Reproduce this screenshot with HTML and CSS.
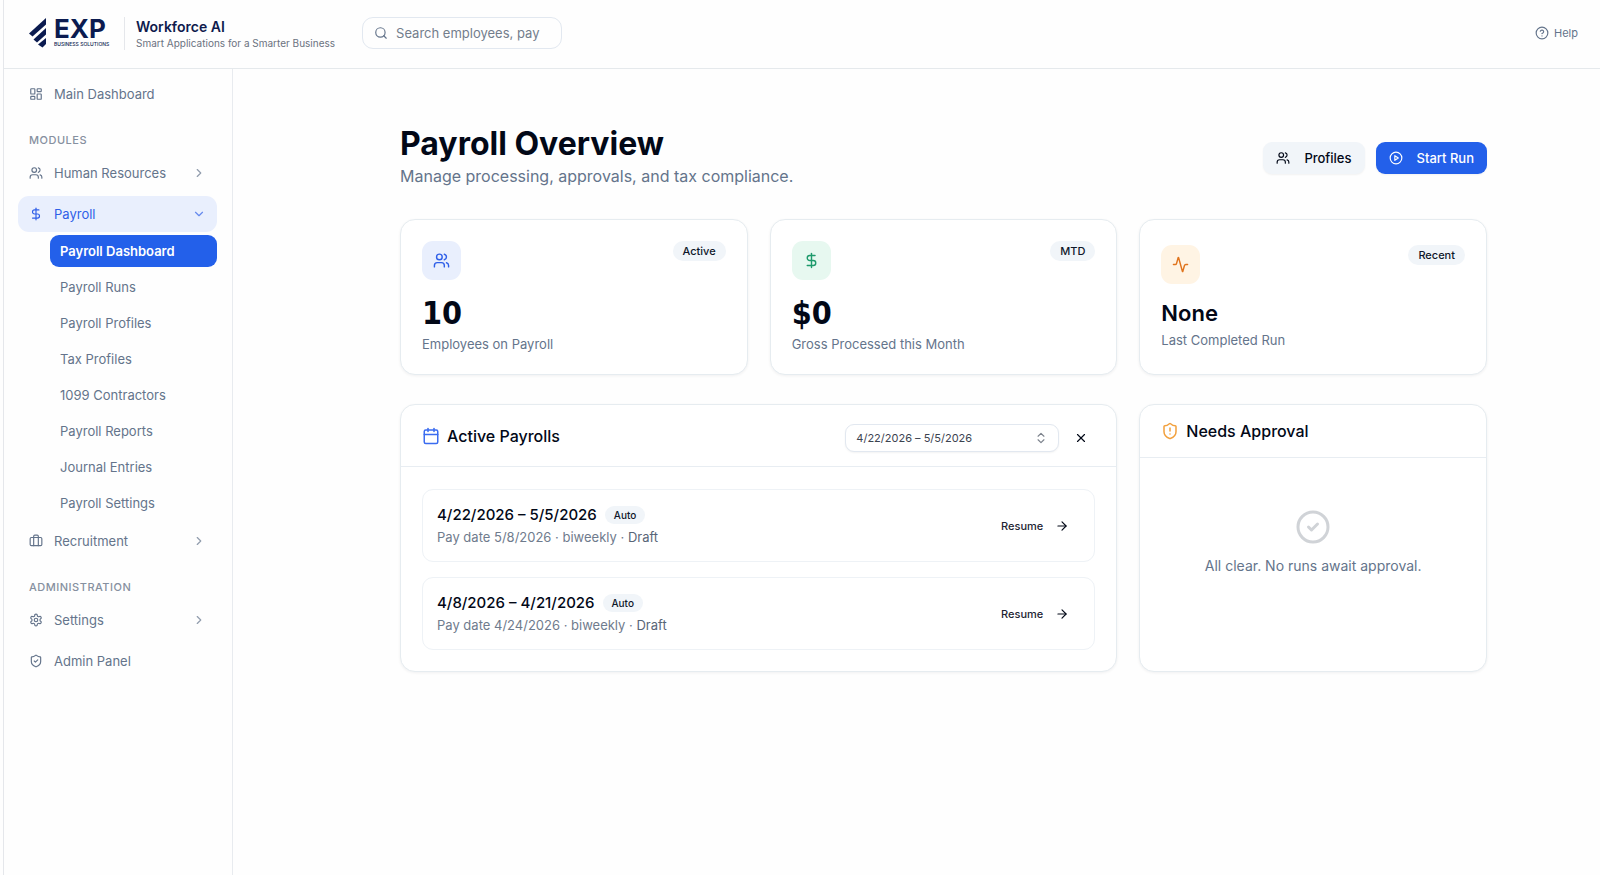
FILE: index.html
```html
<!DOCTYPE html>
<html lang="en">

<head>
    <meta charset="UTF-8">
    <meta name="viewport" content="width=device-width, initial-scale=1.0">
    <title>Payroll Overview</title>
    <link rel="stylesheet" href="styles.css">
</head>

<body>
    <!-- Shared icons -->
    <svg class="sprite" aria-hidden="true">
        <symbol id="users" viewBox="0 0 24 24"><path d="M16 21v-2a4 4 0 0 0-4-4H6a4 4 0 0 0-4 4v2"/><circle cx="9" cy="7" r="4"/><path d="M22 21v-2a4 4 0 0 0-3-3.870"/><path d="M16 3.130a4 4 0 0 1 0 7.750"/></symbol>
        <symbol id="dollar" viewBox="0 0 24 24"><path d="M12 2v20"/><path d="M17 5H9.500a3.500 3.500 0 0 0 0 7h5a3.500 3.500 0 0 1 0 7H6"/></symbol>
        <symbol id="right" viewBox="0 0 24 24"><path d="m9 18 6-6-6-6"/></symbol>
        <symbol id="arrow" viewBox="0 0 24 24"><path d="M5 12h14"/><path d="m12 5 7 7-7 7"/></symbol>
    </svg>

    <header class="topbar">
        <a class="logo" href="#">
            <svg class="logo-mark" viewBox="0 0 18 30">
                <path d="M17 0v6.500L3.500 18.500 0 15.500z"/>
                <path d="M17 10v6.500L8 24.500 4.500 21.500z"/>
                <path d="M17 20v6l-3.500 3.500-4.500-3z"/>
            </svg>
            <span class="logo-text">
                <span class="logo-name">EXP</span>
                <span class="logo-sub">BUSINESS SOLUTIONS</span>
            </span>
        </a>
        <div class="product">
            <span class="product-name">Workforce AI</span>
            <span class="product-tagline">Smart Applications for a Smarter Business</span>
        </div>
        <label class="search">
            <svg class="icon" viewBox="0 0 24 24"><circle cx="11" cy="11" r="8"/><path d="m21 21-4.300-4.300"/></svg>
            <input type="text" placeholder="Search employees, pay" aria-label="Search">
        </label>
        <a class="help" href="#">
            <svg class="icon" viewBox="0 0 24 24"><circle cx="12" cy="12" r="10"/><path d="M9.100 9a3 3 0 0 1 5.800 1c0 2-3 3-3 3"/><path d="M12 17h.010"/></svg>
            Help
        </a>
    </header>

    <div class="layout">
        <nav class="sidebar">
            <a class="nav-item" href="#">
                <svg class="icon" viewBox="0 0 24 24"><rect x="3" y="3" width="7" height="9" rx="1"/><rect x="14" y="3" width="7" height="5" rx="1"/><rect x="14" y="12" width="7" height="9" rx="1"/><rect x="3" y="16" width="7" height="5" rx="1"/></svg>
                Main Dashboard
            </a>

            <h2 class="nav-label">Modules</h2>
            <button class="nav-item" type="button">
                <svg class="icon"><use href="#users"/></svg>
                Human Resources
                <svg class="icon chevron"><use href="#right"/></svg>
            </button>
            <button class="nav-item open" type="button" aria-expanded="true">
                <svg class="icon"><use href="#dollar"/></svg>
                Payroll
                <svg class="icon chevron" viewBox="0 0 24 24"><path d="m6 9 6 6 6-6"/></svg>
            </button>
            <div class="subnav">
                <a class="active" href="#">Payroll Dashboard</a>
                <a href="#">Payroll Runs</a>
                <a href="#">Payroll Profiles</a>
                <a href="#">Tax Profiles</a>
                <a href="#">1099 Contractors</a>
                <a href="#">Payroll Reports</a>
                <a href="#">Journal Entries</a>
                <a href="#">Payroll Settings</a>
            </div>
            <button class="nav-item" type="button">
                <svg class="icon" viewBox="0 0 24 24"><rect x="2" y="6" width="20" height="14" rx="2"/><path d="M16 20V4a2 2 0 0 0-2-2h-4a2 2 0 0 0-2 2v16"/></svg>
                Recruitment
                <svg class="icon chevron"><use href="#right"/></svg>
            </button>

            <h2 class="nav-label">Administration</h2>
            <button class="nav-item" type="button">
                <svg class="icon" viewBox="0 0 24 24"><path d="M12.220 2h-.440a2 2 0 0 0-2 2v.180a2 2 0 0 1-1 1.730l-.430.250a2 2 0 0 1-2 0l-.150-.080a2 2 0 0 0-2.730.730l-.220.380a2 2 0 0 0 .730 2.730l.150.100a2 2 0 0 1 1 1.720v.510a2 2 0 0 1-1 1.740l-.150.090a2 2 0 0 0-.730 2.730l.220.380a2 2 0 0 0 2.730.730l.150-.080a2 2 0 0 1 2 0l.430.250a2 2 0 0 1 1 1.730V20a2 2 0 0 0 2 2h.440a2 2 0 0 0 2-2v-.180a2 2 0 0 1 1-1.730l.430-.250a2 2 0 0 1 2 0l.150.080a2 2 0 0 0 2.730-.730l.220-.390a2 2 0 0 0-.730-2.730l-.150-.080a2 2 0 0 1-1-1.740v-.500a2 2 0 0 1 1-1.740l.150-.090a2 2 0 0 0 .730-2.730l-.220-.380a2 2 0 0 0-2.730-.730l-.150.080a2 2 0 0 1-2 0l-.430-.250a2 2 0 0 1-1-1.730V4a2 2 0 0 0-2-2z"/><circle cx="12" cy="12" r="3"/></svg>
                Settings
                <svg class="icon chevron"><use href="#right"/></svg>
            </button>
            <a class="nav-item" href="#">
                <svg class="icon" viewBox="0 0 24 24"><path d="M20 13c0 5-3.500 7.500-7.660 8.950a1 1 0 0 1-.670-.010C7.500 20.500 4 18 4 13V6a1 1 0 0 1 1-1c2 0 4.500-1.200 6.240-2.720a1.170 1.170 0 0 1 1.520 0C14.510 3.810 17 5 19 5a1 1 0 0 1 1 1z"/><path d="m9 12 2 2 4-4"/></svg>
                Admin Panel
            </a>
        </nav>

        <main class="main">
            <div class="content">
                <div class="page-head">
                    <div>
                        <h1>Payroll Overview</h1>
                        <p>Manage processing, approvals, and tax compliance.</p>
                    </div>
                    <div class="actions">
                        <button class="btn" type="button">
                            <svg class="icon"><use href="#users"/></svg>
                            Profiles
                        </button>
                        <button class="btn primary" type="button">
                            <svg class="icon" viewBox="0 0 24 24"><circle cx="12" cy="12" r="10"/><path d="m10 8 6 4-6 4z"/></svg>
                            Start Run
                        </button>
                    </div>
                </div>

                <div class="grid">
                    <section class="card stat">
                        <div class="stat-top">
                            <span class="tile blue"><svg class="icon"><use href="#users"/></svg></span>
                            <span class="badge">Active</span>
                        </div>
                        <strong class="stat-value">10</strong>
                        <span class="stat-label">Employees on Payroll</span>
                    </section>
                    <section class="card stat">
                        <div class="stat-top">
                            <span class="tile green"><svg class="icon"><use href="#dollar"/></svg></span>
                            <span class="badge">MTD</span>
                        </div>
                        <strong class="stat-value">$0</strong>
                        <span class="stat-label">Gross Processed this Month</span>
                    </section>
                    <section class="card stat">
                        <div class="stat-top">
                            <span class="tile orange"><svg class="icon" viewBox="0 0 24 24"><path d="M22 12h-2.480a2 2 0 0 0-1.930 1.460l-2.350 8.360a.250.250 0 0 1-.480 0L9.240 2.180a.250.250 0 0 0-.480 0l-2.350 8.360A2 2 0 0 1 4.490 12H2"/></svg></span>
                            <span class="badge">Recent</span>
                        </div>
                        <strong class="stat-value word">None</strong>
                        <span class="stat-label">Last Completed Run</span>
                    </section>

                    <section class="card wide">
                        <div class="card-head tall">
                            <h2>
                                <svg class="icon calendar" viewBox="0 0 24 24"><path d="M8 2v4"/><path d="M16 2v4"/><rect x="3" y="4" width="18" height="18" rx="2"/><path d="M3 10h18"/></svg>
                                Active Payrolls
                            </h2>
                            <div class="filter">
                                <div class="picker">
                                    <select aria-label="Pay period">
                                        <option>4/22/2026 – 5/5/2026</option>
                                        <option>4/8/2026 – 4/21/2026</option>
                                    </select>
                                    <svg class="icon" viewBox="0 0 24 24"><path d="m7 15 5 5 5-5"/><path d="m7 9 5-5 5 5"/></svg>
                                </div>
                                <button class="clear" type="button" aria-label="Clear">
                                    <svg class="icon" viewBox="0 0 24 24"><path d="M18 6 6 18"/><path d="m6 6 12 12"/></svg>
                                </button>
                            </div>
                        </div>
                        <div class="runs">
                            <div class="run">
                                <div>
                                    <h3>4/22/2026 – 5/5/2026 <span class="badge small">Auto</span></h3>
                                    <p>Pay date 5/8/2026 · biweekly · <span>Draft</span></p>
                                </div>
                                <button class="resume" type="button">Resume <svg class="icon"><use href="#arrow"/></svg></button>
                            </div>
                            <div class="run">
                                <div>
                                    <h3>4/8/2026 – 4/21/2026 <span class="badge small">Auto</span></h3>
                                    <p>Pay date 4/24/2026 · biweekly · <span>Draft</span></p>
                                </div>
                                <button class="resume" type="button">Resume <svg class="icon"><use href="#arrow"/></svg></button>
                            </div>
                        </div>
                    </section>

                    <section class="card">
                        <div class="card-head">
                            <h2>
                                <svg class="icon alert" viewBox="0 0 24 24"><path d="M20 13c0 5-3.500 7.500-7.660 8.950a1 1 0 0 1-.670-.010C7.500 20.500 4 18 4 13V6a1 1 0 0 1 1-1c2 0 4.500-1.200 6.240-2.720a1.170 1.170 0 0 1 1.520 0C14.510 3.810 17 5 19 5a1 1 0 0 1 1 1z"/><path d="M12 8v4"/><path d="M12 16h.010"/></svg>
                                Needs Approval
                            </h2>
                        </div>
                        <div class="empty">
                            <svg class="icon" viewBox="0 0 24 24"><circle cx="12" cy="12" r="10"/><path d="m9 12 2 2 4-4"/></svg>
                            <p>All clear. No runs await approval.</p>
                        </div>
                    </section>
                </div>
            </div>
        </main>
    </div>
</body>

</html>
```
FILE: styles.css
```css
/* General */

* {
    box-sizing: border-box;
}

body {
    margin: 0 0 0 3px;
    min-height: 100vh;
    display: flex;
    flex-direction: column;
    border-left: 1px solid #e5e7eb;
    background: #fefefe;
    color: #020817;
    font-family: Inter, "Liberation Sans", sans-serif;
    font-size: 13px;
}

h1,
h2,
h3,
p {
    margin: 0;
}

a {
    color: inherit;
    text-decoration: none;
}

button,
input,
select {
    font: inherit;
    color: inherit;
}

button {
    border: none;
    background: none;
    cursor: pointer;
}

.sprite {
    display: none;
}

.icon {
    width: 14px;
    height: 14px;
    flex-shrink: 0;
    fill: none;
    stroke: currentColor;
    stroke-width: 2;
    stroke-linecap: round;
    stroke-linejoin: round;
}

/* Top bar */

.topbar {
    display: flex;
    align-items: center;
    height: 69px;
    padding: 0 22px 2px 25px;
    border-bottom: 1px solid #e5e9ec;
}

.logo {
    display: flex;
    align-items: center;
    gap: 7px;
    color: #0b1b50;
}

.logo-mark {
    width: 18px;
    height: 30px;
    fill: currentColor;
}

.logo-text {
    display: flex;
    flex-direction: column;
    width: 52px;
    padding-bottom: 3px;
    white-space: nowrap;
}

.logo-name {
    font-size: 26px;
    font-weight: 700;
    line-height: 24px;
}

.logo-sub {
    font-size: 5px;
    font-weight: 500;
    line-height: 6px;
}

.product {
    display: flex;
    flex-direction: column;
    margin-left: 18px;
    padding-left: 11px;
    border-left: 1px solid #e5e7eb;
}

.product-name {
    color: #0f1b4d;
    font-size: 14px;
    font-weight: 600;
    line-height: 19px;
}

.product-tagline {
    color: #6b7280;
    font-size: 10px;
    line-height: 14px;
}

.search {
    display: flex;
    align-items: center;
    gap: 8px;
    width: 200px;
    height: 32px;
    margin-left: 27px;
    padding: 0 11px;
    border: 1px solid #e2e8f0;
    border-radius: 11px;
    color: #64748b;
}

.search input {
    width: 100%;
    min-width: 0;
    padding: 0;
    border: none;
    outline: none;
    background: none;
}

.search input::placeholder {
    color: #737d8c;
}

.help {
    display: flex;
    align-items: center;
    gap: 5px;
    margin-left: auto;
    color: #64748b;
    font-size: 11px;
}

/* Sidebar */

.layout {
    display: flex;
    flex: 1;
}

.sidebar {
    width: 229px;
    flex-shrink: 0;
    padding: 7px 15px 20px 14px;
    border-right: 1px solid #e8ebef;
    color: #64748b;
}

.nav-item {
    display: flex;
    align-items: center;
    gap: 11px;
    width: 100%;
    height: 36px;
    margin-bottom: 5px;
    padding: 0 11px;
    border-radius: 11px;
    text-align: left;
}

.nav-item.open {
    margin-bottom: 3px;
    background: #e9effd;
    color: #2f5fe8;
}

.chevron {
    margin-left: auto;
    opacity: 0.7;
}

.nav-label {
    margin: 20px 11px 7px;
    color: #8690a0;
    font-size: 11px;
    font-weight: 500;
    line-height: 16px;
    letter-spacing: 0.5px;
    text-transform: uppercase;
}

.subnav {
    display: flex;
    flex-direction: column;
    gap: 4px;
    margin: 0 0 4px 32px;
}

.subnav a {
    padding: 0 10px;
    border-radius: 9px;
    line-height: 32px;
}

.subnav .active {
    background: #2360ea;
    color: #ffffff;
    font-weight: 600;
}

/* Main */

.main {
    flex: 1;
    padding: 57px 0 40px 54px;
}

.content {
    max-width: 1087px;
    margin: 0 auto;
}

.page-head {
    display: flex;
    align-items: center;
    justify-content: space-between;
    margin-bottom: 29px;
}

h1 {
    font-size: 32px;
    font-weight: 700;
    line-height: 36px;
}

.page-head p {
    color: #64748b;
    font-size: 16px;
    line-height: 28px;
}

.actions {
    display: flex;
    gap: 11px;
}

.btn {
    display: flex;
    align-items: center;
    gap: 14px;
    height: 32px;
    padding: 0 13px;
    border-radius: 9px;
    background: #f1f5f9;
    box-shadow: 0 1px 2px rgba(0, 0, 0, 0.05);
    font-weight: 500;
}

.btn.primary {
    background: #2360ea;
    color: #ffffff;
}

/* Cards */

.grid {
    display: grid;
    grid-template-columns: repeat(3, 1fr);
    gap: 29px 22px;
}

.card {
    border: 1px solid #e6ecf0;
    border-radius: 15px;
    background: #ffffff;
    box-shadow: 0 1px 3px rgba(15, 23, 42, 0.06);
}

.wide {
    grid-column: span 2;
}

.stat {
    display: flex;
    flex-direction: column;
    justify-content: center;
    padding: 21px;
}

.stat-top {
    display: flex;
    align-items: flex-start;
    justify-content: space-between;
    margin-bottom: 15px;
}

.tile {
    display: flex;
    padding: 11px;
    border-radius: 11px;
}

.tile .icon {
    width: 17px;
    height: 17px;
}

.blue {
    background: #e9effd;
    color: #2f5fe8;
}

.green {
    background: #e7f8f0;
    color: #1f9a6c;
}

.orange {
    background: #fff4e4;
    color: #e0741d;
}

.badge {
    padding: 0 10px;
    border-radius: 10px;
    background: #f1f5f9;
    color: #0f172a;
    font-size: 11px;
    font-weight: 500;
    line-height: 20px;
}

.stat-value {
    margin-bottom: 4px;
    font-family: "DejaVu Sans Condensed", Inter, sans-serif;
    font-size: 32px;
    font-weight: 700;
    line-height: 36px;
}

.stat-value.word {
    font-family: Inter, sans-serif;
    font-size: 22px;
    font-weight: 600;
    line-height: 28px;
}

.stat-label {
    color: #64748b;
    line-height: 18px;
}

.card-head {
    display: flex;
    align-items: flex-start;
    justify-content: space-between;
    padding: 14px 21px;
    border-bottom: 1px solid #e8edf2;
}

.card-head.tall {
    padding-top: 19px;
}

.card-head h2 {
    display: flex;
    align-items: center;
    gap: 7px;
    font-size: 16px;
    font-weight: 500;
    line-height: 24px;
}

.card-head h2 .icon {
    width: 18px;
    height: 18px;
}

.calendar {
    color: #3b6cf0;
}

.alert {
    color: #f2a03d;
}

.filter {
    display: flex;
    gap: 8px;
}

.picker {
    position: relative;
    width: 214px;
}

.picker select {
    display: block;
    width: 100%;
    height: 28px;
    padding: 0 30px 0 10px;
    border: 1px solid #e2e8f0;
    border-radius: 9px;
    background: #ffffff;
    box-shadow: 0 1px 2px rgba(0, 0, 0, 0.05);
    color: #3c4350;
    font-size: 11px;
    appearance: none;
}

.picker .icon {
    position: absolute;
    top: 7px;
    right: 11px;
    color: #7c828c;
    pointer-events: none;
}

.clear {
    display: flex;
    align-items: center;
    justify-content: center;
    width: 28px;
    height: 28px;
    padding: 0;
}

/* Payroll runs */

.runs {
    display: flex;
    flex-direction: column;
    gap: 15px;
    padding: 22px 21px 21px;
}

.run {
    display: flex;
    align-items: center;
    justify-content: space-between;
    padding: 14px;
    border: 1px solid #eef2f6;
    border-radius: 11px;
}

.run h3 {
    display: flex;
    align-items: center;
    gap: 8px;
    font-size: 15px;
    font-weight: 500;
    line-height: 22px;
}

.run p {
    padding-top: 1px;
    color: #6f7b8d;
    line-height: 20px;
}

.run p span {
    color: #596577;
}

.badge.small {
    font-size: 10px;
    padding: 0 9px;
    line-height: 18px;
}

.resume {
    display: flex;
    align-items: center;
    gap: 12px;
    padding: 8px 11px;
    color: #1e2433;
    font-size: 11px;
    font-weight: 500;
}

.resume .icon {
    color: #020817;
}

.empty {
    display: flex;
    flex-direction: column;
    align-items: center;
    gap: 9px;
    padding: 51px 21px;
    color: #64748b;
    font-size: 14px;
    line-height: 24px;
    text-align: center;
}

.empty .icon {
    width: 36px;
    height: 36px;
    color: #d0d3d7;
}
```
